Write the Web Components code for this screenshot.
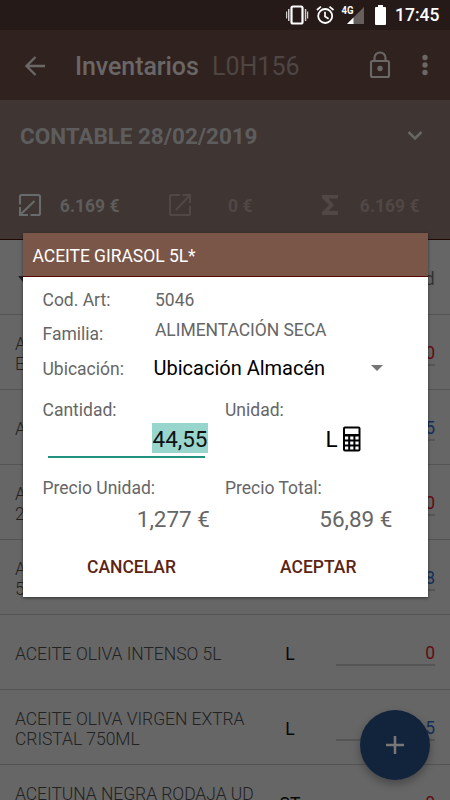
<!DOCTYPE html>
<html lang="es">
<head>
<meta charset="utf-8">
<title>Inventarios</title>
<style>
  body {
    margin: 0;
    width: 450px;
    height: 800px;
    overflow: hidden;
    background: #666;
    font-family: Roboto, "Liberation Sans", sans-serif;
  }
</style>
</head>
<body>
<inv-app></inv-app>

<script>
const define = (name, html) => {
  customElements.define(name, class extends HTMLElement {
    constructor() {
      super();
      this.attachShadow({ mode: 'open' }).innerHTML = html;
    }
  });
};

define('inv-status-bar', `
  <style>
    :host {
      display: flex;
      justify-content: flex-end;
      height: 30px;
      background: #251a17;
      color: #fff;
    }
    svg { display: block; }
    span {
      width: 55px;
      font-size: 17.5px;
      font-weight: 500;
      line-height: 31px;
      white-space: nowrap;
    }
    text { font: 700 11px "Roboto", sans-serif; }
  </style>
  <svg width="111" height="30" viewBox="284 0 111 30" fill="#fff">
    <rect x="291.5" y="6.5" width="11" height="17" rx="1.5" fill="none" stroke="#fff" stroke-width="2.2"/>
    <path d="M288 9h1.5v12H288zM286 11.5h1.2v7H286zM304.8 9h1.5v12h-1.5zM307 11.5h1.2v7H307z" opacity=".8"/>
    <circle cx="325.2" cy="16" r="7" fill="none" stroke="#fff" stroke-width="1.8"/>
    <path d="M325 11.8v4.7l3.6 2.2M316.9 10l4-3.4M333.5 10l-4-3.4" fill="none" stroke="#fff" stroke-width="1.7"/>
    <path d="M364 7v17h-17z" opacity=".3"/>
    <path d="M353.5 17.5V24H347z"/>
    <text x="341.5" y="14" textLength="12" lengthAdjust="spacingAndGlyphs">4G</text>
    <path d="M378 5h5v2h2a1 1 0 0 1 1 1v16a1 1 0 0 1-1 1h-9a1 1 0 0 1-1-1V8a1 1 0 0 1 1-1h2z"/>
  </svg>
  <span>17:45</span>
`);

define('inv-toolbar', `
  <style>
    :host {
      display: flex;
      align-items: center;
      height: 70px;
      box-sizing: border-box;
      padding: 2px 0 0 20px;
      background: #30231f;
      color: #6a6766;
      font-size: 25px;
    }
    b { margin-left: 24px; width: 137px; font-weight: 500; letter-spacing: -.08px; }
    span { flex: 1; color: #4f4543; }
    svg { display: block; }
  </style>
  <svg width="31" height="30" viewBox="20 50 31 30" fill="none" stroke="#6a6766" stroke-width="2.4">
    <path d="M45 65H27M35.5 56l-9 9 9 9"/>
  </svg>
  <b><slot name="title"></slot></b>
  <span><slot></slot></span>
  <svg width="90" height="40" viewBox="360 45 90 40" fill="#6a6766">
    <path d="M374.5 59v-2a5.5 5.5 0 0 1 11 0v2" fill="none" stroke="#6a6766" stroke-width="2.1"/>
    <rect x="371" y="60" width="18" height="16" rx="1.5" fill="none" stroke="#6a6766" stroke-width="2.1"/>
    <circle cx="380" cy="67.5" r="2.7"/>
    <circle cx="425" cy="56.5" r="2.7"/>
    <circle cx="425" cy="64" r="2.7"/>
    <circle cx="425" cy="71.5" r="2.7"/>
  </svg>
`);

define('inv-summary', `
  <style>
    :host {
      display: block;
      height: 140px;
      box-sizing: border-box;
      border-bottom: 1px solid #210705;
      background: #3f3533;
      color: #5e5d5d;
    }
    .head {
      display: flex;
      justify-content: space-between;
      align-items: center;
      height: 72px;
      padding: 0 26px 0 20px;
      font-size: 22.5px;
      font-weight: 700;
      letter-spacing: -.05px;
    }
    .tabs {
      display: grid;
      grid-template-columns: repeat(3, 150px);
      height: 66px;
      font-size: 17.5px;
      font-weight: 700;
    }
    .tabs div {
      display: flex;
      align-items: center;
      justify-content: space-between;
      box-sizing: border-box;
      padding: 0 30.5px 0 18px;
    }
    .tabs span { padding-top: 1px; }
    .dim { color: #514846; }
    svg { display: block; }
  </style>
  <div class="head">
    <slot></slot>
    <svg width="18" height="12" viewBox="0 0 18 12" fill="none" stroke="#686665" stroke-width="2.5"><path d="M2.5 2 9 8.500l6.500-6.500"/></svg>
  </div>
  <div class="tabs">
    <div>
      <svg width="24" height="24" fill="none" stroke="#686b6b" stroke-width="2.1">
        <path d="M2 11.500V3.500A1.500 1.500 0 0 1 3.500 2h17A1.500 1.500 0 0 1 22 3.500v17a1.500 1.500 0 0 1-1.500 1.500H12.500M2 14V22h8M2.500 21.500 16.500 8"/>
      </svg>
      <span>6.169 €</span>
    </div>
    <div class="dim">
      <svg width="24" height="24" fill="none" stroke="#514846" stroke-width="2.1">
        <path d="M22 13v7.500a1.500 1.500 0 0 1-1.500 1.500h-17A1.500 1.500 0 0 1 2 20.500v-17A1.500 1.500 0 0 1 3.500 2H12M14.500 2H22v8M21.500 2.500 8 17"/>
      </svg>
      <span style="margin-right: 17px">0 €</span>
    </div>
    <div class="dim">
      <svg width="24" height="24" fill="#514846"><path d="M4 2h16v3.500h-9.500L16 12l-5.500 6H20v4H4v-3l7-7-7-7z"/></svg>
      <span>6.169 €</span>
    </div>
  </div>
`);

define('inv-list-head', `
  <style>
    :host {
      display: flex;
      justify-content: space-between;
      align-items: center;
      height: 75px;
      box-sizing: border-box;
      padding: 3px 15.5px 0 18px;
      border-bottom: 1px solid #545454;
      color: #333;
      font-size: 17.5px;
    }
  </style>
  <svg width="10" height="6"><path d="M0 0h10L5 6z" fill="#222"/></svg>
  <span><slot></slot></span>
`);

define('inv-row', `
  <style>
    :host {
      display: grid;
      grid-template-columns: 245px 60px 1fr 99px;
      align-items: center;
      height: 75px;
      box-sizing: border-box;
      padding: 4px 15px 0 15px;
      border-bottom: 1px solid #545454;
      font-size: 17.5px;
      line-height: 20.5px;
    }
    .name { color: #222; font-weight: 300; letter-spacing: -.05px; white-space: pre; }
    .unit { text-align: center; color: #080808; }
    .qty {
      grid-column: 4;
      height: 22px;
      border-bottom: 2px solid #555;
      line-height: 22px;
      text-align: right;
      color: #152f58;
    }
    :host([zero]) .qty { color: #610d10; }
  </style>
  <span class="name"><slot></slot></span>
  <span class="unit"><slot name="unit"></slot></span>
  <span class="qty"><slot name="qty"></slot></span>
`);

define('inv-fab', `
  <style>
    :host {
      position: absolute;
      left: 360px;
      top: 710px;
      display: grid;
      place-items: center;
      width: 70px;
      height: 70px;
      border-radius: 50%;
      background: #12243c;
      box-shadow: 0 4px 8px rgba(0, 0, 0, .3);
    }
  </style>
  <svg width="18" height="18" stroke="#777" stroke-width="2.5"><path d="M0 9h18M9 0v18"/></svg>
`);

define('inv-dialog', `
  <style>
    :host {
      position: absolute;
      left: 22.5px;
      top: 233px;
      width: 405px;
      height: 364px;
      background: #fff;
      box-shadow: 0 1px 3px rgba(0, 0, 0, .5);
      color: #666;
      font-size: 17.5px;
    }
    header {
      height: 44px;
      box-sizing: border-box;
      padding: 3px 0 0 10px;
      border-bottom: 1px solid #590905;
      background: #7a5648;
      color: #fff;
      letter-spacing: -.04px;
      line-height: 40px;
    }
    .details {
      display: grid;
      grid-template-columns: 112.5px 1fr;
      grid-template-rows: 33.5px 35px 35px;
      padding: 6px 0 0 20px;
      line-height: 34px;
    }
    .family { margin-top: -4px; letter-spacing: -.05px; }
    .spinner {
      display: flex;
      align-items: center;
      justify-content: space-between;
      box-sizing: border-box;
      height: 33px;
      padding-right: 45px;
      margin-left: -1.5px;
      color: #000;
      font-size: 20px;
    }
    .fields {
      display: grid;
      grid-template-columns: 182.5px 1fr;
      grid-template-rows: 78px 73px;
      padding: 10px 0 0 20px;
    }
    .fields > div { line-height: 27px; }
    .big { font-size: 22.5px; }
    .input {
      display: flex;
      justify-content: flex-end;
      width: 157px;
      height: 32px;
      margin-left: 5px;
      border-bottom: 2.5px solid #21927f;
      color: #000;
    }
    mark {
      height: 30px;
      margin: -1px -3px 0 0;
      background: #98d5cd;
      color: #111;
      line-height: 32px;
    }
    .unit {
      display: flex;
      align-items: center;
      gap: 5px;
      padding: 0 0 0 100.5px;
      color: #000;
      line-height: 30px;
    }
    .price { width: 167.5px; padding-top: 2px; text-align: right; line-height: 30px; }
    footer {
      display: flex;
      padding: 0 0 0 64.5px;
      color: #5c2413;
      font-weight: 500;
      line-height: 38px;
    }
    footer span:first-child { width: 193px; }
    svg { display: block; }
  </style>
  <header><slot name="title"></slot></header>
  <div class="details">
    <span>Cod. Art:</span><span><slot name="code"></slot></span>
    <span>Familia:</span><span class="family"><slot name="family"></slot></span>
    <span>Ubicación:</span>
    <span class="spinner">
      <slot name="place"></slot>
      <svg width="12" height="6"><path d="M0 0h12L6 6z" fill="#757575"/></svg>
    </span>
  </div>
  <div class="fields">
    <div>Cantidad:
      <div class="input big"><mark><slot name="qty"></slot></mark></div>
    </div>
    <div>Unidad:
      <div class="unit big">
        <slot name="unit"></slot>
        <svg width="18" height="26" viewBox="0 0 18 26">
          <rect y=".5" width="17.5" height="25" rx="2" fill="#000"/>
          <path fill="#fff" d="M2 2.5h13.500V8H2zM2 10.500h3.200v3H2zM7.200 10.500h3.200v3H7.200zM12.400 10.500h3.200v3h-3.200zM2 15.500h3.200v3H2zM7.200 15.500h3.200v3H7.200zM12.400 15.500h3.200v3h-3.200zM2 20.500h3.200v3H2zM7.200 20.500h3.200v3H7.200zM12.400 20.500h3.200v3h-3.200z"/>
        </svg>
      </div>
    </div>
    <div>Precio Unidad:
      <div class="price big"><slot name="price"></slot></div>
    </div>
    <div>Precio Total:
      <div class="price big"><slot name="total"></slot></div>
    </div>
  </div>
  <footer><span>CANCELAR</span><span>ACEPTAR</span></footer>
`);

define('inv-app', `
  <style>
    :host {
      position: relative;
      display: block;
      width: 450px;
      height: 800px;
      overflow: hidden;
    }
  </style>
  <inv-status-bar></inv-status-bar>
  <inv-toolbar><span slot="title">Inventarios</span>L0H156</inv-toolbar>
  <inv-summary>CONTABLE 28/02/2019</inv-summary>
  <inv-list-head>d</inv-list-head>
  <inv-row zero>A
E<span slot="qty">0</span></inv-row>
  <inv-row>A<span slot="qty">5</span></inv-row>
  <inv-row zero>A
2<span slot="qty">0</span></inv-row>
  <inv-row>A
5<span slot="qty">8</span></inv-row>
  <inv-row zero>ACEITE OLIVA INTENSO 5L<span slot="unit">L</span><span slot="qty">0</span></inv-row>
  <inv-row>ACEITE OLIVA VIRGEN EXTRA
CRISTAL 750ML<span slot="unit">L</span><span slot="qty">5</span></inv-row>
  <inv-row zero>ACEITUNA NEGRA RODAJA UD
&nbsp;<span slot="unit">ST</span><span slot="qty">0</span></inv-row>
  <inv-fab></inv-fab>
  <inv-dialog>
    <span slot="title">ACEITE GIRASOL 5L*</span>
    <span slot="code">5046</span>
    <span slot="family">ALIMENTACIÓN SECA</span>
    <span slot="place">Ubicación Almacén</span>
    <span slot="qty">44,55</span>
    <span slot="unit">L</span>
    <span slot="price">1,277 €</span>
    <span slot="total">56,89 €</span>
  </inv-dialog>
`);
</script>
</body>
</html>
